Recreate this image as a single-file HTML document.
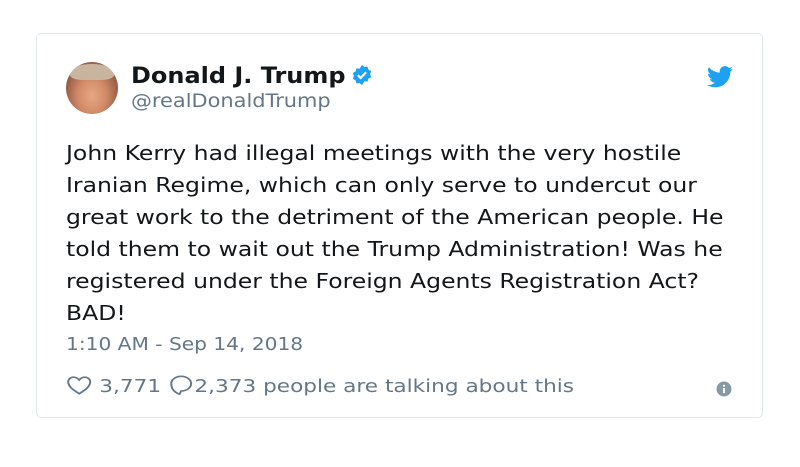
<!DOCTYPE html>
<html><head><style>
body{margin:0;width:800px;height:467px;background:#fff;font-family:"DejaVu Sans","Liberation Sans",sans-serif;overflow:hidden}
.card{position:absolute;left:36px;top:33px;width:727px;height:385px;border:1px solid #e1e8ed;border-radius:5px;box-sizing:border-box}
.av{position:absolute;left:66px;top:62px;width:52px;height:52px;border-radius:50%;overflow:hidden;background:radial-gradient(ellipse at 50% 65%,#e8a884 0,#d08866 40%,#9a6048 70%,#5a6a78 100%)}
.av:before{content:"";position:absolute;left:4px;top:2px;width:44px;height:16px;border-radius:50% 50% 30% 30%;background:#c9b4a0}
.s{transform-origin:0 0;white-space:nowrap}
.name{position:absolute;left:131px;top:64px;font-size:22px;font-weight:bold;color:#14171a}
.handle{position:absolute;left:131px;top:90px;font-size:19px;color:#657786;transform:scaleX(1.1)}
.text{position:absolute;left:66px;top:137px;font-size:20px;line-height:32px;color:#14171a;transform:scaleX(1.176)}
.time{position:absolute;left:66px;top:334px;font-size:18px;color:#657786;transform:scaleX(1.12)}
.foot{position:absolute;left:66px;top:373px;font-size:18px;color:#657786;transform:scaleX(1.2)}
</style></head><body>
<div class="card"></div>
<div class="av"></div>
<div class="name s"><span style="display:inline-block;transform:scaleX(1.09);transform-origin:0 0">Donald J. Trump</span><svg width="22" height="22" viewBox="0 0 24 24" style="vertical-align:-3px;margin-left:23px"><path fill="#1da1f2" d="M12 1l2.6 2.2 3.4-.4 1 3.3 3 1.7-1.1 3.2 1.1 3.2-3 1.7-1 3.3-3.4-.4L12 23l-2.6-2.2-3.4.4-1-3.3-3-1.7L3.1 13 2 9.8l3-1.7 1-3.3 3.4.4z"/><path d="M7.5 12.2l3 3 6-6.2" stroke="#fff" stroke-width="2.4" fill="none"/></svg></div>
<div class="handle s">@realDonaldTrump</div>
<svg style="position:absolute;left:707px;top:66px" width="26" height="22" viewBox="0 0 24 20"><path fill="#1da1f2" d="M24 2.4c-.9.4-1.8.6-2.8.8 1-.6 1.8-1.6 2.2-2.7-1 .6-2 1-3.1 1.2C19.3.6 18 0 16.6 0c-2.7 0-4.9 2.2-4.9 4.9 0 .4 0 .8.1 1.1C7.7 5.8 4.1 3.9 1.7.9c-.4.7-.7 1.6-.7 2.5 0 1.7.9 3.2 2.2 4.1-.8 0-1.6-.2-2.2-.6v.1c0 2.4 1.7 4.4 3.9 4.8-.4.1-.8.2-1.3.2-.3 0-.6 0-.9-.1.6 2 2.4 3.4 4.6 3.4-1.7 1.3-3.8 2.1-6.1 2.1-.4 0-.8 0-1.2-.1 2.2 1.4 4.8 2.2 7.5 2.2 9.1 0 14-7.5 14-14v-.6c1-.7 1.8-1.6 2.5-2.5z"/></svg>
<div class="text s">John Kerry had illegal meetings with the very hostile<br>Iranian Regime, which can only serve to undercut our<br>great work to the detriment of the American people. He<br>told them to wait out the Trump Administration! Was he<br>registered under the Foreign Agents Registration Act?<br>BAD!</div>
<div class="time s">1:10 AM - Sep 14, 2018</div>
<div class="foot s"><svg width="22" height="22" viewBox="0 0 24 22" style="vertical-align:-4px"><path d="M12 20.5C6 16 2 12.5 2 7.5 2 4.5 4.3 2.5 7 2.5c2.2 0 3.7 1.3 5 3 1.3-1.7 2.8-3 5-3 2.7 0 5 2 5 5 0 5-4 8.5-10 13z" fill="none" stroke="#657786" stroke-width="1.8"/></svg> 3,771 <svg width="22" height="24" viewBox="0 0 24 24" style="vertical-align:-5px"><path d="M12 2.5c5 0 9 3.6 9 8s-4 8-9 8l-1.5 3.5c-3-1.3-7.5-4.5-7.5-11.5 0-4.4 4-8 9-8z" fill="none" stroke="#657786" stroke-width="1.8"/></svg>2,373 people are talking about this</div>
<svg style="position:absolute;left:716px;top:381px" width="16" height="16" viewBox="0 0 16 16"><circle cx="8" cy="8" r="7.5" fill="#8899a6"/><rect x="7" y="7" width="2" height="5" fill="#fff"/><circle cx="8" cy="4.8" r="1.1" fill="#fff"/></svg>
</body></html>
